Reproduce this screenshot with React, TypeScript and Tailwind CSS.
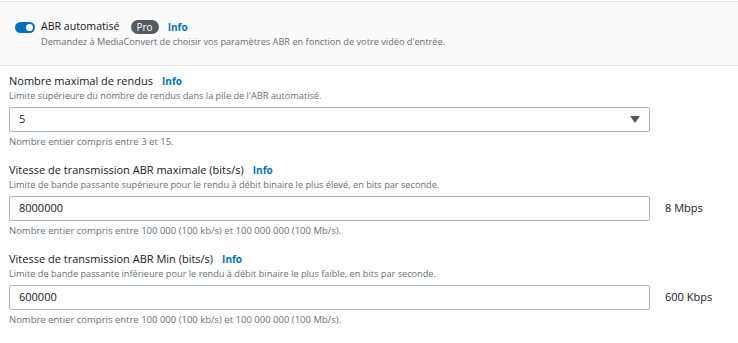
import React from 'react'

const font = { fontFamily: '"Open Sans", "Noto Sans", sans-serif' }

function Info() {
  return <span className="ml-[9px] text-[10px] font-bold text-[#0073bb]">Info</span>
}

function Field({ label, hint, value, note, suffix, select }: { label: string; hint: string; value: string; note: string; suffix?: string; select?: boolean }) {
  return (
    <div className="px-[9px]">
      <div className="flex items-center h-[15px] text-[11px] text-[#16191f]">
        {label}
        <Info />
      </div>
      <div className="text-[9.2px] text-[#687078] leading-[14px]">{hint}</div>
      <div className="flex items-center mt-[4px]">
        <div className="w-[641px] h-[25px] border border-[#aab7b8] rounded-[2px] flex items-center justify-between px-[9px] text-[11px] text-[#16191f] bg-white">
          <span>{value}</span>
          {select && (
            <svg width="10" height="7" viewBox="0 0 10 7"><path d="M0 0h10L5 7z" fill="#545b64" /></svg>
          )}
        </div>
        {suffix && <span className="ml-[15px] text-[11px] text-[#16191f]">{suffix}</span>}
      </div>
      <div className="mt-[3px] text-[9.5px] text-[#687078] leading-[14px]">{note}</div>
    </div>
  )
}

export default function App() {
  return (
    <div className="w-[738px] h-[343px] bg-white overflow-hidden" style={font}>
      <div className="mt-[1px] h-[65px] bg-[#fafafa] border-t border-b border-[#e4e4e4] flex items-start pl-[15px] pt-[17px]">
        <div className="w-[20px] h-[11px] rounded-full bg-[#0073bb] relative mt-[3px]">
          <div className="absolute right-[2px] top-[2px] w-[7px] h-[7px] rounded-full bg-white" />
        </div>
        <div className="ml-[6px]">
          <div className="flex items-center h-[16px] text-[10.6px] text-[#16191f]">
            ABR automatisé
            <span className="ml-[11px] px-[6px] h-[14px] leading-[14px] rounded-full bg-[#545b64] text-white text-[10px]">Pro</span>
            <Info />
          </div>
          <div className="text-[9.2px] text-[#687078] leading-[14px]">
            Demandez à MediaConvert de choisir vos paramètres ABR en fonction de votre vidéo d'entrée.
          </div>
        </div>
      </div>
      <div className="pt-[8px] flex flex-col gap-[14px]">
        <Field
          label="Nombre maximal de rendus"
          hint="Limite supérieure du nombre de rendus dans la pile de l'ABR automatisé."
          value="5"
          note="Nombre entier compris entre 3 et 15."
          select
        />
        <Field
          label="Vitesse de transmission ABR maximale (bits/s)"
          hint="Limite de bande passante supérieure pour le rendu à débit binaire le plus élevé, en bits par seconde."
          value="8000000"
          note="Nombre entier compris entre 100 000 (100 kb/s) et 100 000 000 (100 Mb/s)."
          suffix="8 Mbps"
        />
        <Field
          label="Vitesse de transmission ABR Min (bits/s)"
          hint="Limite de bande passante inférieure pour le rendu à débit binaire le plus faible, en bits par seconde."
          value="600000"
          note="Nombre entier compris entre 100 000 (100 kb/s) et 100 000 000 (100 Mb/s)."
          suffix="600 Kbps"
        />
      </div>
    </div>
  )
}
